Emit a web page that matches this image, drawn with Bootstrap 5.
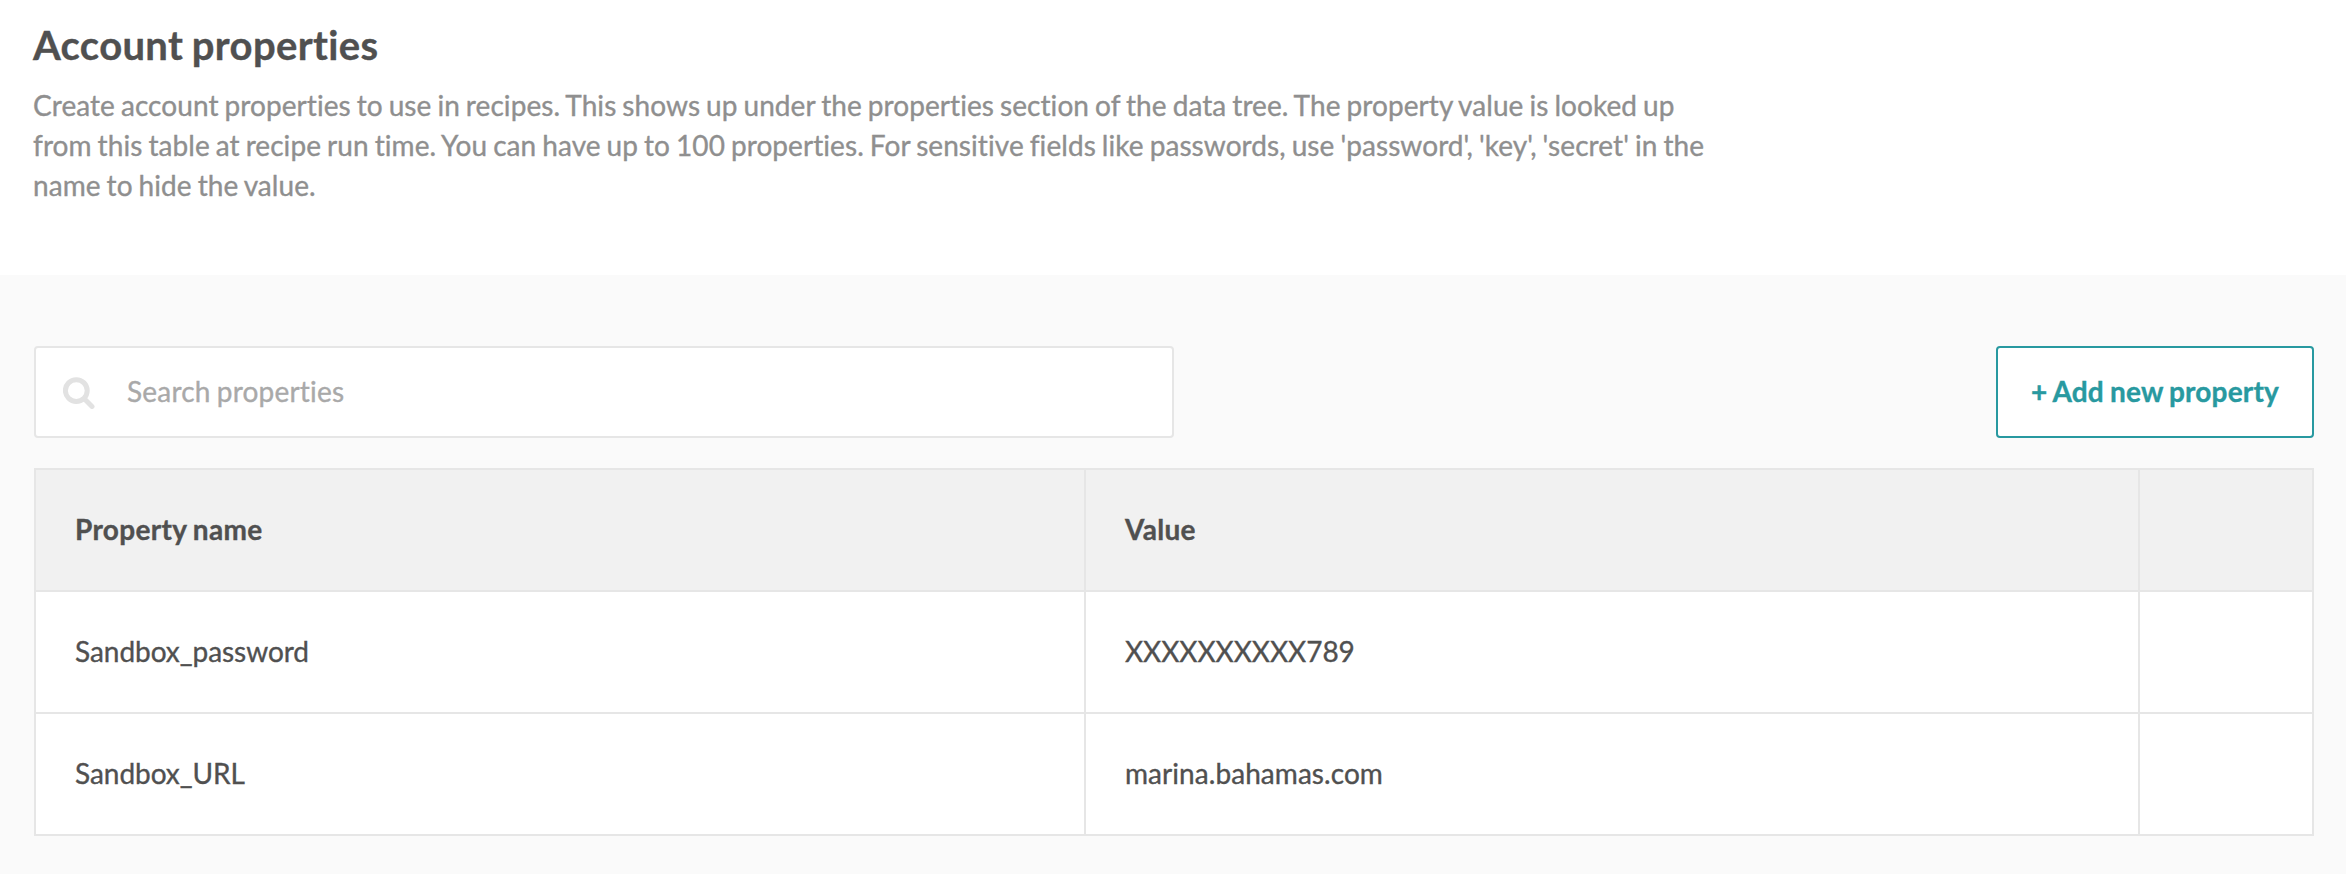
<!DOCTYPE html>
<html lang="en">
<head>
<meta charset="utf-8">
<meta name="viewport" content="width=device-width, initial-scale=1">
<title>Account properties</title>
<link rel="stylesheet" href="https://cdn.jsdelivr.net/npm/bootstrap@5.3.0/dist/css/bootstrap.min.css">
<style>
  body { font-family: Lato, "Liberation Sans", sans-serif; font-size: 28px; line-height: 40px; color: #505050; background: #fafafa; -webkit-text-stroke: .35px; }
  .page-head { height: 275px; padding: 20px 33px 0; }
  .page-title { font-size: 40px; line-height: 50px; font-weight: 700; letter-spacing: .35px; word-spacing: -1.5px; color: #505050; margin-bottom: 15px; }
  .page-desc { width: 1690px; letter-spacing: .07px; word-spacing: -1.25px; color: #8f8f8f; }
  .page-body { padding: 71px 32px 38px 34px; }
  .search-box { width: 1140px; height: 92px; border: 2px solid #e6e6e6; border-radius: 4px; padding-left: 27px; gap: 30px; }
  .search-box .form-control { font-size: 28px; line-height: 40px; letter-spacing: .2px; word-spacing: -1.2px; color: #505050; padding: 0 0 2px; }
  .search-box .form-control::placeholder { color: #a9a9a9; opacity: 1; }
  .btn-add { width: 318px; height: 92px; padding: 0 0 2px; border: 2px solid #2899a0; border-radius: 4px; background: #fff; color: #2899a0; font-size: 28px; line-height: 40px; font-weight: 700; letter-spacing: .2px; word-spacing: -1px; }
  .btn-add:hover { background: #2899a0; color: #fff; }
  .props { table-layout: fixed; color: #505050; border-color: #e6e6e6; margin-top: 30px; }
  .props > :not(caption) > * > * { height: 122px; padding: 0 39px 2px; border: 2px solid #e6e6e6; vertical-align: middle; background: #fff; color: #505050; box-shadow: none; }
  .props > thead > tr > th { background: #f1f1f1; letter-spacing: .33px; word-spacing: -1px; }
  .props > tbody > tr > td { letter-spacing: -.05px; }
  .props > tbody > tr > td.host { letter-spacing: .06px; }
  .col-name { width: 1050px; }
  .col-value { width: 1054px; }
</style>
</head>
<body>
<header class="page-head bg-white">
  <h1 class="page-title">Account properties</h1>
  <p class="page-desc mb-0">Create account properties to use in recipes. This shows up under the properties section of the data tree. The property value is looked up<br>from this table at recipe run time. You can have up to 100 properties. For sensitive fields like passwords, use 'password', 'key', 'secret' in the<br>name to hide the value.</p>
</header>
<main class="page-body">
  <div class="d-flex justify-content-between align-items-center">
    <div class="search-box d-flex align-items-center bg-white">
      <svg class="flex-shrink-0" width="34" height="34" viewBox="0 0 34 34" fill="none" stroke="#e2e2e2" aria-hidden="true">
        <circle cx="13.3" cy="15.6" r="10.9" stroke-width="5"/>
        <path d="M21.8 24.2l7.2 7.2" stroke-width="5" stroke-linecap="round"/>
      </svg>
      <input class="form-control border-0 shadow-none" type="text" placeholder="Search properties" aria-label="Search properties">
    </div>
    <button class="btn btn-add" type="button">+ Add new property</button>
  </div>
  <table class="table props mb-0">
    <colgroup><col class="col-name"><col class="col-value"><col></colgroup>
    <thead><tr><th scope="col">Property name</th><th scope="col">Value</th><th></th></tr></thead>
    <tbody>
      <tr><td>Sandbox_password</td><td>XXXXXXXXXX789</td><td></td></tr>
      <tr><td>Sandbox_URL</td><td class="host">marina.bahamas.com</td><td></td></tr>
    </tbody>
  </table>
</main>
<script src="https://cdn.jsdelivr.net/npm/bootstrap@5.3.0/dist/js/bootstrap.bundle.min.js"></script>
</body>
</html>
